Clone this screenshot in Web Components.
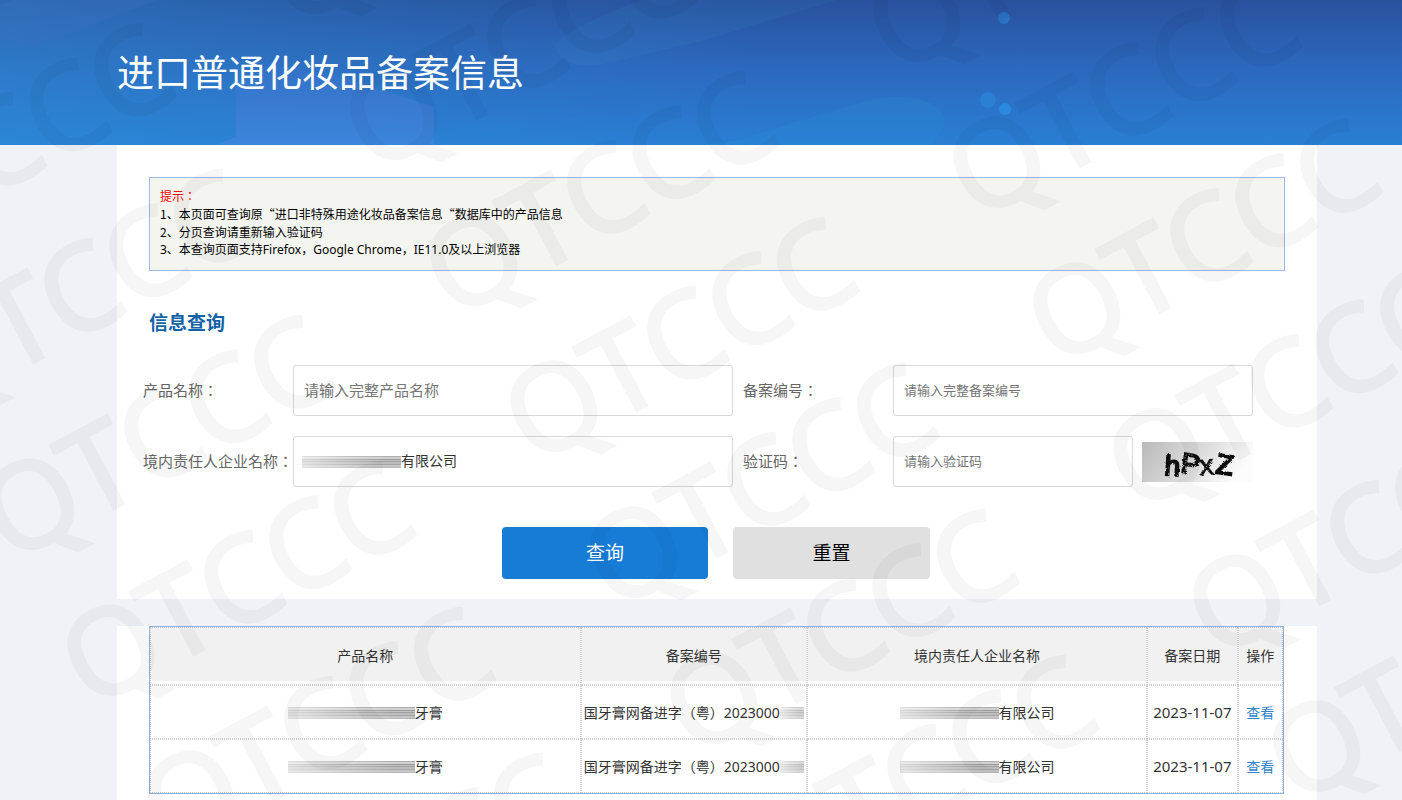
<!DOCTYPE html>
<html lang="zh-CN">
<head>
<meta charset="utf-8">
<title>进口普通化妆品备案信息</title>
<style>
  body {
    margin: 0;
    background: #eff3f7;
    color: #333;
    font-family: "Noto Sans CJK SC", sans-serif;
    font-size: 14px;
  }
</style>
</head>
<body>
<query-page>
  <page-banner slot="banner">进口普通化妆品备案信息</page-banner>
  <tip-box slot="query">
    <span slot="title">提示：</span>
    <div>1、本页面可查询原“进口非特殊用途化妆品备案信息“数据库中的产品信息</div>
    <div>2、分页查询请重新输入验证码</div>
    <div style="font-family: 'Noto Sans', 'Noto Sans CJK SC', sans-serif">3、本查询页面支持Firefox，Google Chrome，IE11.0及以上浏览器</div>
  </tip-box>
  <query-form slot="query">信息查询</query-form>
  <result-table slot="result"></result-table>
</query-page>
<water-mark text="QTCCC"></water-mark>

<script>
  class QueryPage extends HTMLElement {
    constructor() {
      super();
      this.attachShadow({ mode: 'open' });
      this.shadowRoot.innerHTML = `
        <style>
          :host {
            display: flex;
            flex-direction: column;
            min-height: 100vh;
          }
          main {
            flex: 1;
            display: flex;
            flex-direction: column;
            gap: 27px;
            padding: 0 85px 0 117px;
          }
          section { background: #fff; }
          .query { padding: 32px 0 20px; }
          .result { flex: 1; padding: 0 33px 0 32px; }
        </style>
        <slot name="banner"></slot>
        <main>
          <section class="query"><slot name="query"></slot></section>
          <section class="result"><slot name="result"></slot></section>
        </main>
      `;
    }
  }
  customElements.define('query-page', QueryPage);

  class PageBanner extends HTMLElement {
    constructor() {
      super();
      this.attachShadow({ mode: 'open' });
      this.shadowRoot.innerHTML = `
        <style>
          :host {
            display: block;
            position: relative;
            background: linear-gradient(#29519d, #2c66bb 42%, #2b70c6 65%, #297fd5);
          }
          svg {
            position: absolute;
            inset: 0;
            width: 100%;
            height: 100%;
          }
          h1 {
            position: relative;
            margin: 0;
            padding: 43px 117px 46px;
            font-size: 37px;
            line-height: 56px;
            font-weight: 400;
            color: #fff;
          }
        </style>
        <svg viewBox="0 0 1402 145" preserveAspectRatio="none" aria-hidden="true">
          <defs>
            <linearGradient id="side">
              <stop offset="0" stop-color="#2f93d8" stop-opacity=".4"/>
              <stop offset="1" stop-color="#2a88d0" stop-opacity="0"/>
            </linearGradient>
            <linearGradient id="block" x2="0" y2="1">
              <stop offset="0" stop-color="#4075d0" stop-opacity="0"/>
              <stop offset=".5" stop-color="#3c7ad2" stop-opacity=".85"/>
              <stop offset="1" stop-color="#3c85dc"/>
            </linearGradient>
            <linearGradient id="band" x2="0" y2="1">
              <stop offset="0" stop-color="#2f86c0" stop-opacity=".12"/>
              <stop offset="1" stop-color="#3a80c8" stop-opacity=".2"/>
            </linearGradient>
          </defs>
          <rect width="760" height="145" fill="url(#side)"/>
          <path d="M0 0H158L33 47L0 38Z" fill="#3f70c0" fill-opacity=".25"/>
          <path d="M236 60L340 76L434 107V145H216L236 137Z" fill="url(#block)"/>
          <path d="M837 0L701 41L598 65Q560 68 555 46Q560 32 640 0Z" fill="url(#band)"/>
          <path d="M701 145L740 140L780 127L865 101Q905 91 932 104Q958 118 930 145Z" fill="#2c93d5" fill-opacity=".18"/>
          <g fill="#2b8ee4">
            <circle cx="1004" cy="18" r="6" fill-opacity=".5"/>
            <circle cx="988" cy="100" r="8" fill-opacity=".5"/>
            <circle cx="1005" cy="109" r="6" fill-opacity=".8"/>
          </g>
        </svg>
        <h1><slot></slot></h1>
      `;
    }
  }
  customElements.define('page-banner', PageBanner);

  class TipBox extends HTMLElement {
    constructor() {
      super();
      this.attachShadow({ mode: 'open' });
      this.shadowRoot.innerHTML = `
        <style>
          :host {
            display: block;
            margin: 0 32px;
            padding: 9px 10px 11px;
            border: 1px solid #9db8ec;
            background: #f4f5f0;
            color: #000;
            font-size: 12px;
            line-height: 18px;
          }
          /* centred full-width colon */
          .title {
            color: #f00;
            font-family: "Noto Sans CJK TC", sans-serif;
            font-feature-settings: "locl" 0;
          }
        </style>
        <div class="title"><slot name="title"></slot></div>
        <slot></slot>
      `;
    }
  }
  customElements.define('tip-box', TipBox);

  // Smudged strip that covers the private part of a name
  class MaskedText extends HTMLElement {
    constructor() {
      super();
      this.attachShadow({ mode: 'open' });
      this.shadowRoot.innerHTML = `
        <style>
          :host {
            display: inline-block;
            flex: none;
            width: 99px;
            height: 12px;
            vertical-align: -1px;
            background:
              linear-gradient(90deg, rgba(255, 255, 255, .6), rgba(255, 255, 255, .25) 45%, transparent 85%),
              linear-gradient(#b0b0b0 1px, #d0d0d0 1px 3px, #9a9a9a 3px 4px, #c2c2c2 4px 5px, #a0a0a0 5px 6px,
                #bdbdbd 6px 8px, #a6a6a6 8px 9px, #c6c6c6 9px 11px, #b8b8b8 11px);
          }
          :host([size="long"]) { width: 127px; }
          :host([size="short"]) { width: 24px; opacity: .7; }
        </style>
      `;
    }
  }
  customElements.define('masked-text', MaskedText);

  class FormField extends HTMLElement {
    constructor() {
      super();
      this.attachShadow({ mode: 'open' });
    }

    connectedCallback() {
      const label = this.getAttribute('label');
      const placeholder = this.getAttribute('placeholder') || '';
      const value = this.getAttribute('value') || '';

      this.shadowRoot.innerHTML = `
        <style>
          :host {
            display: flex;
            align-items: center;
          }
          label {
            flex: none;
            width: var(--label-width, 150px);
            box-sizing: border-box;
            padding: 0 0 2px var(--label-indent, 0);
            font-family: "Noto Sans CJK TC", sans-serif;
            font-feature-settings: "locl" 0;
            font-size: 15px;
            color: #666;
            white-space: nowrap;
          }
          .box {
            flex: 1;
            min-width: 0;
            display: flex;
            align-items: center;
            height: 51px;
            box-sizing: border-box;
            padding-left: 8px;
            border: 1px solid #d9d9d9;
            border-radius: 3px;
            background: #fff;
          }
          .box:focus-within { border-color: #177cd6; }
          input {
            flex: 1;
            min-width: 0;
            height: 100%;
            box-sizing: border-box;
            padding: 0 2px 2px;
            border: 0;
            outline: 0;
            background: none;
            font-family: inherit;
            font-size: var(--field-size, 13px);
            color: #333;
          }
          .masked input { padding: 0 0 3px; }
          input::placeholder { color: #757575; }
        </style>
        <label for="field">${label}</label>
        <div class="box ${value ? 'masked' : ''}">
          <slot name="prefix"></slot>
          <input id="field" type="text" value="${value}" placeholder="${placeholder}">
        </div>
        <slot></slot>
      `;
    }

    reset() {
      this.shadowRoot.querySelector('input').value = '';
      this.querySelectorAll('masked-text').forEach(mask => mask.remove());
    }
  }
  customElements.define('form-field', FormField);

  class CaptchaImage extends HTMLElement {
    constructor() {
      super();
      this.attachShadow({ mode: 'open' });
      this.shadowRoot.innerHTML = `
        <style>
          :host {
            display: block;
            flex: none;
            margin-left: 9px;
          }
          svg { display: block; }
          text {
            font-family: "Liberation Sans", sans-serif;
            font-size: 28px;
            stroke: #111;
            fill: #111;
          }
        </style>
        <svg width="111" height="40" viewBox="0 0 111 40" role="img" aria-label="验证码">
          <defs>
            <linearGradient id="fade" y2=".25">
              <stop offset="0" stop-color="#bababa"/>
              <stop offset=".6" stop-color="#dedede"/>
              <stop offset="1" stop-color="#fcfcfc"/>
            </linearGradient>
            <filter id="rough" x="-10%" y="-10%" width="120%" height="120%">
              <feTurbulence type="fractalNoise" baseFrequency=".35" numOctaves="2" seed="4"/>
              <feDisplacementMap in="SourceGraphic" scale="3"/>
            </filter>
          </defs>
          <rect width="111" height="40" fill="url(#fade)"/>
          <g filter="url(#rough)">
            <text transform="translate(22 33) rotate(4)" stroke-width="2">h</text>
            <text transform="translate(38 30) rotate(8)" stroke-width="2">P</text>
            <text transform="translate(58 33) rotate(-4)" stroke-width="1">x</text>
            <text transform="translate(73 31) rotate(8)" stroke-width="2">Z</text>
          </g>
          <g fill="none" stroke="#ddd" stroke-dasharray="1 2">
            <path d="M35 34L48 14M38 36L51 17M41 36L54 18M57 34L70 18M60 36L72 22"/>
            <circle cx="47" cy="16" r="4"/>
          </g>
        </svg>
      `;
    }
  }
  customElements.define('captcha-image', CaptchaImage);

  class QueryForm extends HTMLElement {
    constructor() {
      super();
      this.attachShadow({ mode: 'open' });
      this.shadowRoot.innerHTML = `
        <style>
          :host { display: block; }
          h2 {
            margin: 37px 32px 29px;
            font-size: 19px;
            line-height: 28px;
            color: #1363a6;
          }
          .fields {
            display: grid;
            grid-template-columns: minmax(0, 59fr) minmax(0, 52fr);
            gap: 20px 0;
            padding: 0 64px 0 26px;
          }
          .large { --field-size: 15px; }
          .medium { --field-size: 14px; }
          .right {
            --label-width: 160px;
            --label-indent: 10px;
          }
          .actions {
            display: flex;
            justify-content: center;
            gap: 25px;
            margin-top: 40px;
            padding-right: 2px;
          }
          button {
            width: 197px;
            height: 52px;
            padding: 0 0 3px;
            border: 0;
            border-radius: 4px;
            background: #e0e0e0;
            color: #000;
            font-family: inherit;
            font-size: 19px;
            cursor: pointer;
          }
          .primary {
            width: 206px;
            background: #177cd6;
            color: #fff;
          }
        </style>
        <h2><slot></slot></h2>
        <form>
          <div class="fields">
            <form-field class="large" label="产品名称：" placeholder="请输入完整产品名称"></form-field>
            <form-field class="right" label="备案编号：" placeholder="请输入完整备案编号"></form-field>
            <form-field class="medium" label="境内责任人企业名称：" value="有限公司">
              <masked-text slot="prefix"></masked-text>
            </form-field>
            <form-field class="right" label="验证码：" placeholder="请输入验证码">
              <captcha-image></captcha-image>
            </form-field>
          </div>
          <div class="actions">
            <button class="primary" type="submit">查询</button>
            <button type="reset">重置</button>
          </div>
        </form>
      `;
      const form = this.shadowRoot.querySelector('form');
      form.addEventListener('submit', event => event.preventDefault());
      form.addEventListener('reset', () => {
        form.querySelectorAll('form-field').forEach(field => field.reset());
      });
    }
  }
  customElements.define('query-form', QueryForm);

  class ResultTable extends HTMLElement {
    constructor() {
      super();
      this.attachShadow({ mode: 'open' });
      this.rows = [
        { name: '牙膏', code: '国牙膏网备进字（粤）2023000', company: '有限公司', date: '2023-11-07' },
        { name: '牙膏', code: '国牙膏网备进字（粤）2023000', company: '有限公司', date: '2023-11-07' }
      ];
    }

    connectedCallback() {
      this.shadowRoot.innerHTML = `
        <style>
          :host {
            display: block;
            border: 1px solid #8fb1e3;
            font-family: "Noto Sans", "Noto Sans CJK SC", sans-serif;
          }
          table {
            width: 100%;
            table-layout: fixed;
            border-spacing: 0;
          }
          th, td {
            height: 54px;
            box-sizing: border-box;
            padding: 0;
            border: 1px dotted #d0d0d0;
            font-size: 14px;
            font-weight: 400;
            text-align: center;
            white-space: nowrap;
            overflow: hidden;
          }
          th {
            height: 58px;
            padding-bottom: 2px;
            background: linear-gradient(#f1f1f1, #f1f1f1) no-repeat 0 0 / 100% calc(100% - 3px);
          }
          .date { font-size: 15px; }
          a { color: #3383cb; text-decoration: none; }
          a:hover { text-decoration: underline; }
        </style>
        <table>
          <colgroup>
            <col style="width: 38%"><col style="width: 20%"><col style="width: 30%"><col style="width: 8%"><col style="width: 4%">
          </colgroup>
          <thead>
            <tr><th>产品名称</th><th>备案编号</th><th>境内责任人企业名称</th><th>备案日期</th><th>操作</th></tr>
          </thead>
          <tbody>
            ${this.rows.map(row => `
              <tr>
                <td><masked-text size="long"></masked-text>${row.name}</td>
                <td>${row.code}<masked-text size="short"></masked-text></td>
                <td><masked-text></masked-text>${row.company}</td>
                <td class="date">${row.date}</td>
                <td><a href="#">查看</a></td>
              </tr>
            `).join('')}
          </tbody>
        </table>
      `;
    }
  }
  customElements.define('result-table', ResultTable);

  // Slanted text repeated over the whole page
  class WaterMark extends HTMLElement {
    constructor() {
      super();
      this.attachShadow({ mode: 'open' });
    }

    connectedCallback() {
      const text = this.getAttribute('text');
      let marks = '';
      for (let col = -1; col <= 2; col++) {
        for (let row = -4; row <= 5; row++) {
          const x = 554 + col * 523 + row * 80;
          const y = 406 - col * 98 + row * 146;
          if (x < -400 || x > 1440 || y < -50 || y > 1050) continue;
          marks += `<text x="-47" y="43" transform="translate(${x} ${y}) rotate(-28)">${text}</text>`;
        }
      }
      this.shadowRoot.innerHTML = `
        <style>
          :host {
            display: block;
            position: absolute;
            inset: 0;
            overflow: hidden;
            pointer-events: none;
          }
          svg { display: block; width: 100%; height: 100%; }
          text {
            font-family: "Noto Sans", sans-serif;
            font-size: 120px;
            fill: #000;
            stroke: #000;
            stroke-width: 3px;
            opacity: .033;
          }
        </style>
        <svg aria-hidden="true">${marks}</svg>
      `;
    }
  }
  customElements.define('water-mark', WaterMark);
</script>
</body>
</html>
